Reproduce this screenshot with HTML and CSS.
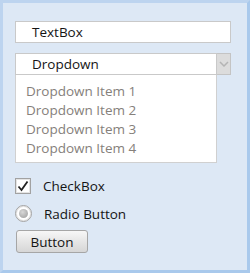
FILE: index.html
```html
<!doctype html>
<html lang="en">
<head>
    <meta charset="UTF-8">
    <title>Controls</title>
    <link rel="stylesheet" href="styles.css">
</head>
<body>
    <div class="panel">
        <div class="textbox">TextBox</div>

        <div class="dropdown">
            <div class="dropdown-value">Dropdown</div>
            <div class="dropdown-arrow">
                <svg width="10" height="6" viewBox="0 0 10 6">
                    <path d="M1 1 L5 5 L9 1" fill="none" stroke="#b4b4b4" stroke-width="1.5"/>
                </svg>
            </div>
        </div>
        <ul class="dropdown-list">
            <li>Dropdown Item 1</li>
            <li>Dropdown Item 2</li>
            <li>Dropdown Item 3</li>
            <li>Dropdown Item 4</li>
        </ul>

        <div class="option">
            <div class="check-box">
                <svg width="12" height="12" viewBox="0 0 12 12">
                    <path d="M1.5 6.5 L4.5 10 L10.5 1.5" fill="none" stroke="#222" stroke-width="1.8"/>
                </svg>
            </div>
            <span>CheckBox</span>
        </div>
        <div class="option">
            <div class="radio-ring"><div class="radio-dot"></div></div>
            <span>Radio Button</span>
        </div>

        <button class="button">Button</button>
    </div>
</body>
</html>
```

FILE: styles.css
```css
* {
    margin: 0;
    padding: 0;
    box-sizing: border-box;
}

body {
    font-family: "Open Sans", "Noto Sans", sans-serif;
    font-size: 13.5px;
    color: #141414;
    background: #fff;
}

.panel {
    width: 250px;
    height: 273px;
    background: #dde8f5;
    border: 3px solid #a9c9ec;
    border-top-color: #bdd4ef;
    border-left-color: #bdd4ef;
    padding: 18px 0 0 12px;
    display: flex;
    flex-direction: column;
    align-items: flex-start;
}

.textbox {
    width: 216px;
    height: 22px;
    background: #fff;
    border: 1px solid #c9c9c9;
    padding-left: 16px;
    line-height: 20px;
}

.dropdown {
    margin-top: 10px;
    width: 216px;
    height: 22px;
    display: flex;
}

.dropdown-value {
    flex: 1;
    background: #fff;
    border: 1px solid #c9c9c9;
    padding-left: 16px;
    line-height: 20px;
}

.dropdown-arrow {
    width: 14px;
    background: #dcdcdc;
    border: 1px solid #c4c4c4;
    border-left: none;
    display: flex;
    align-items: center;
    justify-content: center;
}

.dropdown-list {
    list-style: none;
    width: 202px;
    height: 88px;
    background: #fff;
    border: 1px solid #d0d0d0;
    border-top: none;
    padding: 7px 0 0 10px;
    color: #85807b;
    line-height: 19px;
}

.option {
    display: flex;
    align-items: center;
    gap: 12px;
    height: 17px;
    margin-top: 14px;
}

.option + .option {
    margin-top: 11px;
}

.check-box {
    flex: 0 0 16px;
    width: 16px;
    height: 16px;
    background-color: #ffffff;
    border: 1px solid #a2a2a2;
    box-shadow: inset 0 0 0 1px #e4e4e4;
    display: flex;
    align-items: center;
    justify-content: center;
}

.radio-ring {
    flex: 0 0 17px;
    width: 17px;
    height: 17px;
    border-radius: 50%;
    background-color: #ffffff;
    border: 1px solid #a2a2a2;
    box-shadow: inset 0 0 0 1px #e4e4e4;
    display: flex;
    align-items: center;
    justify-content: center;
}

.radio-dot {
    width: 9px;
    height: 9px;
    border-radius: 50%;
    background: radial-gradient(circle at 40% 35%, #d8d8d8, #9a9a9a);
}

.button {
    margin: 8px 0 0 1px;
    width: 72px;
    height: 23px;
    font: inherit;
    color: #141414;
    background: linear-gradient(#f7f7f7, #e6e6e6 50%, #d6d6d6);
    border: 1px solid #a6a6a6;
    border-radius: 3px;
}
```
